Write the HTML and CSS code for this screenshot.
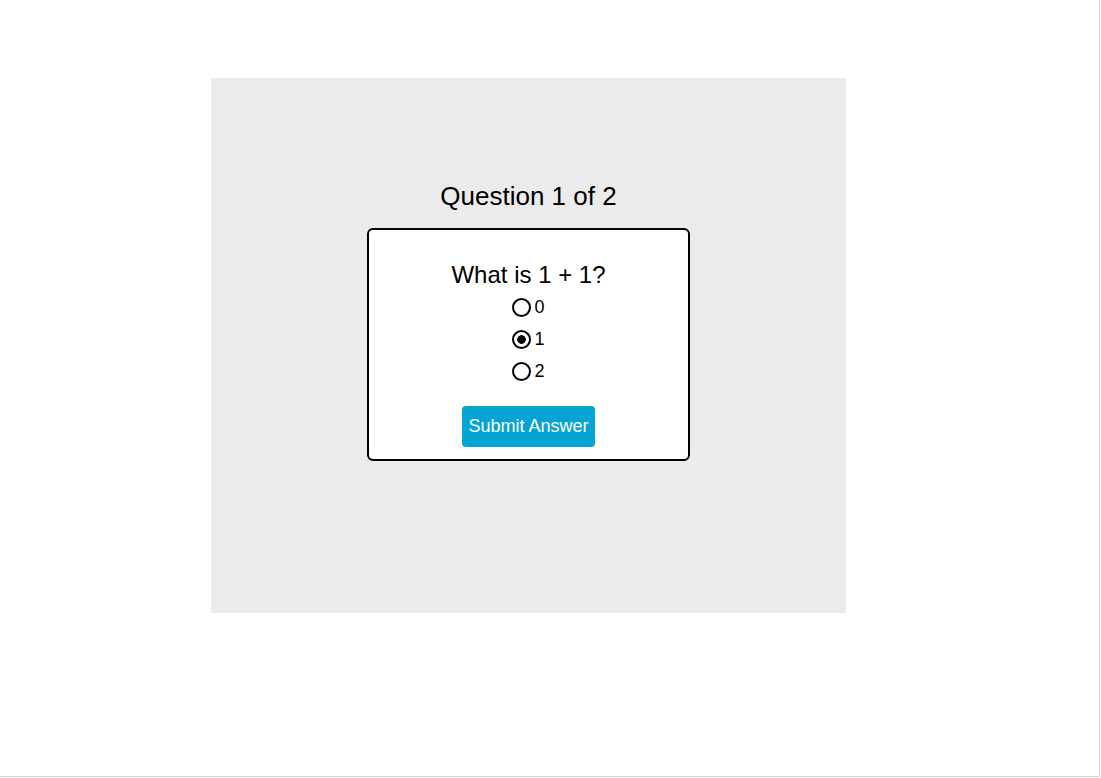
FILE: index.html
```html
<!DOCTYPE html>
<html lang="en">
<head>
<meta charset="utf-8">
<title>Quiz</title>
<link rel="stylesheet" href="styles.css">
</head>
<body>
<div class="frame">
  <div class="stage">
    <h1 class="title">Question 1 of 2</h1>
    <form class="card">
      <p class="question">What is 1 + 1?</p>
      <div class="options">
        <label class="option"><input type="radio" name="q1" value="0"><span>0</span></label>
        <label class="option"><input type="radio" name="q1" value="1" checked><span>1</span></label>
        <label class="option"><input type="radio" name="q1" value="2"><span>2</span></label>
      </div>
      <button type="button" class="submit">Submit Answer</button>
    </form>
  </div>
</div>
</body>
</html>
```
FILE: styles.css
```css
* { box-sizing: border-box; }
html, body { margin: 0; padding: 0; background: #fff; }
body { font-family: "Liberation Sans", Arial, sans-serif; color: #000; }
.frame {
  width: 1100px;
  height: 777px;
  border-right: 1px solid #d4d4d4;
  border-bottom: 1px solid #d4d4d4;
  padding: 78px 0 0 211px;
}
.stage {
  width: 635px;
  height: 535px;
  background: #ebebeb;
  display: flex;
  flex-direction: column;
  align-items: center;
  padding-top: 103px;
}
.title {
  margin: 0;
  font-size: 26px;
  font-weight: normal;
  line-height: 30px;
}
.card {
  margin-top: 17px;
  width: 323px;
  height: 233px;
  background: #fff;
  border: 2px solid #000;
  border-radius: 6px;
  display: flex;
  flex-direction: column;
  align-items: center;
  padding-top: 31px;
}
.question {
  margin: 0;
  font-size: 24px;
  line-height: 28px;
}
.options {
  margin-top: 2px;
  display: flex;
  flex-direction: column;
  align-items: center;
}
.option {
  height: 32px;
  display: flex;
  align-items: center;
  gap: 3px;
  font-size: 18px;
}
.option input {
  appearance: none;
  -webkit-appearance: none;
  margin: 0;
  width: 19px;
  height: 19px;
  border: 2px solid #000;
  border-radius: 50%;
  background: #fff;
}
.option input:checked {
  background: radial-gradient(circle, #000 0 4px, #fff 4.6px);
}
.submit {
  margin-top: 19px;
  height: 41px;
  padding: 0 6px;
  border: none;
  border-radius: 4px;
  background: #04a4d4;
  color: #fff;
  font-family: "Liberation Sans", Arial, sans-serif;
  font-size: 18px;
}
```
